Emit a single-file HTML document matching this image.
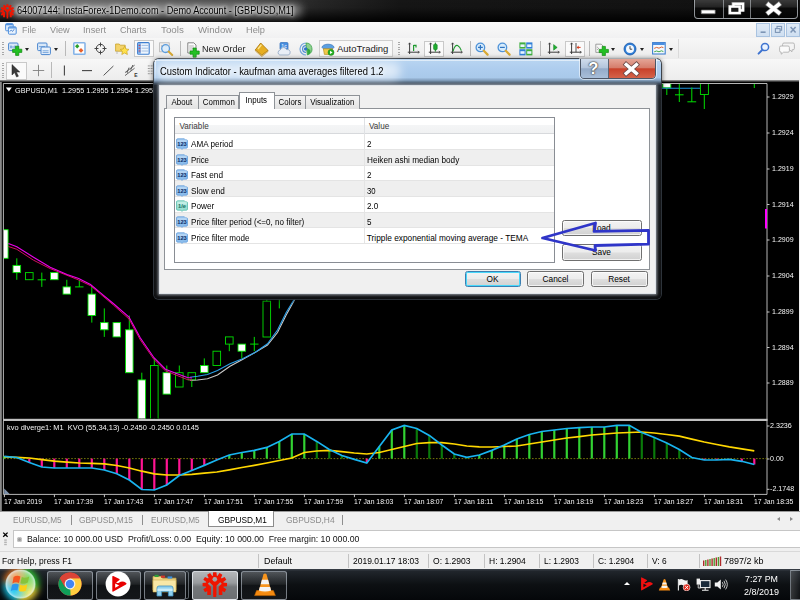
<!DOCTYPE html>
<html lang="en">
<head>
<meta charset="utf-8">
<title>64007144: InstaForex-1Demo.com - Demo Account - [GBPUSD,M1]</title>
<style>
html,body{margin:0;padding:0;}
body{width:800px;height:600px;overflow:hidden;position:relative;background:#f0f0f0;font-family:"Liberation Sans",sans-serif;font-size:9.4px;color:#000;}
.abs{position:absolute;}
.t{position:absolute;white-space:nowrap;line-height:1;transform-origin:0 0;}
/* title bar */
#titlebar{left:0;top:0;width:800px;height:21.5px;background:linear-gradient(rgba(0,0,0,0) 0,rgba(0,0,0,.08) 35%,rgba(0,0,0,.7) 80%,rgba(0,0,0,.95) 100%),linear-gradient(90deg,#626262 0,#5a5a5a 12%,#444 28%,#262626 40%,#161616 50%,#111 100%);}
#title{color:#000;text-shadow:0 0 3px rgba(255,255,255,.9),0 0 5px rgba(255,255,255,.8),0 0 8px rgba(255,255,255,.7);}
#titleglow{left:12px;top:4px;width:290px;height:13px;border-radius:8px;background:rgba(255,255,255,.42);filter:blur(4px);}
/* menu */
#menubar{left:0;top:21.5px;width:800px;height:16px;background:linear-gradient(#fafafa,#f1f1f2);border-bottom:1px solid #d0d0d0;}
.mi{font-size:9.5px;color:#8d8d8d;}
/* toolbars */
#tb1{left:0;top:38px;width:800px;height:21px;background:linear-gradient(#f7f7f7,#ececec);}
#tb2{left:0;top:59px;width:800px;height:22px;background:linear-gradient(#f7f7f7,#ececec);}
.grip{width:2px;background:repeating-linear-gradient(#a8a8a8 0,#a8a8a8 1px,transparent 1px,transparent 2.4px);}
.sep{width:1px;background:#b9b9b9;}
.tog{border:1px solid #c9c9c9;background:#fafafa;box-sizing:border-box;}
.dd{width:0;height:0;border-left:2.6px solid transparent;border-right:2.6px solid transparent;border-top:3px solid #222;}
.tbt{font-size:9.5px;color:#222;}
/* chart */
#chart{left:0;top:81px;width:799px;height:430px;background:#000;}
.ax{color:#f6f6f6;font-size:7.7px;}
/* dialog */
#dlg{left:153.5px;top:59px;width:507px;height:239.5px;border-radius:5px;background:linear-gradient(#b9d5f1 0,#aecdee 10px,#a9c9ea 18.5px,#7f9bb8 21.5px,#3d4c5d 24.5px,#232a33 26.5px,#1b1e22 40px,#101113 100%);box-shadow:0 0 0 1px rgba(50,56,64,.9),0 1px 5px 1px rgba(0,0,0,.55);}
#dlgclient{left:159.5px;top:86px;width:495.5px;height:207px;background:#f0f0f0;box-shadow:0 0 0 1px #dfe3e8,0 0 2.5px 2px rgba(190,198,208,.75);}
#dlgtitle{color:#000;text-shadow:0 0 5px #fff,0 0 8px #fff;}
.tab span{display:inline-block;transform:scaleX(.95);}
.tab{position:absolute;top:94.5px;height:14px;box-sizing:border-box;border:1px solid #8e9297;border-bottom:none;background:linear-gradient(#f4f4f4,#e2e2e2);font-size:8.3px;text-align:center;line-height:13.5px;color:#000;}
#tabpage{left:164px;top:108px;width:486px;height:161.5px;background:#fff;border:1px solid #8e9297;box-sizing:border-box;}
#list{left:173.5px;top:116.5px;width:381.5px;height:146px;background:#fff;border:1px solid #898d94;box-sizing:border-box;}
.row{position:absolute;left:174.5px;width:379.5px;height:15.6px;box-sizing:border-box;border-bottom:1px solid #e4e4e4;}
.row.g{background:#efefef;}
.ltx{font-size:8.3px;color:#000;}
.lt{position:absolute;white-space:nowrap;font-size:8.15px;line-height:1;color:#000;}
.btn{position:absolute;box-sizing:border-box;border:1px solid #707070;border-radius:2.5px;background:linear-gradient(#f3f3f3 0,#ececec 48%,#dedede 52%,#d1d1d1 100%);box-shadow:inset 0 0 0 1px rgba(255,255,255,.7);font-size:8.3px;text-align:center;color:#000;}
/* bottom */
#ctabs{left:0;top:511px;width:800px;height:17px;background:#f0f0f0;border-top:1px solid #9a9a9a;box-sizing:border-box;}
.ct{top:515.5px;font-size:9.4px;color:#8b8b8b;}
#term{left:0;top:528px;width:800px;height:23px;background:#f0f0f0;}
#termbox{left:12.5px;top:530px;width:788px;height:18px;background:#fff;border:1px solid #c6c6c6;box-sizing:border-box;}
#status{left:0;top:551px;width:800px;height:18px;background:#f0f0f0;border-top:1px solid #d9d9d9;box-sizing:border-box;}
.st{top:556px;font-size:9.4px;color:#000;}
.ssep{top:553.5px;width:1px;height:14px;background:#c3c3c3;}
#taskbar{left:0;top:569px;width:800px;height:31px;background:linear-gradient(#3a4149 0,#20252b 8%,#0d1013 50%,#05070a 100%);}
.tbb{position:absolute;top:570.5px;height:29px;width:45px;box-sizing:border-box;border:1px solid rgba(200,210,220,.55);border-radius:2.5px;background:linear-gradient(rgba(255,255,255,.22),rgba(255,255,255,.08) 45%,rgba(255,255,255,.02) 50%,rgba(255,255,255,.06));}
</style>
</head>
<body>
<!-- ===== title bar ===== -->
<div id="titlebar" class="abs"></div>
<div id="titleglow" class="abs"></div>
<svg class="abs" style="left:0.4px;top:4.4px" width="14.8" height="14.8" viewBox="-13 -13 26 26.4"><mask id="gm1"><rect x="-13" y="-13" width="26" height="27" fill="#fff"/><circle cx="0" cy="-5.4" r="2.4" fill="#000"/><path d="M-2.9 13 L-2.9 1.6 L-6.4 -1.7 M2.9 13 L2.9 1.6 L6.4 -1.7" stroke="#000" stroke-width="2.3" fill="none"/></mask><g fill="#ee1500" mask="url(#gm1)"><path d="M-2.2 -8 L-1.7 -12.7 L1.7 -12.7 L2.2 -8 Z" transform="rotate(0)"/><path d="M-2.2 -8 L-1.7 -12.7 L1.7 -12.7 L2.2 -8 Z" transform="rotate(30)"/><path d="M-2.2 -8 L-1.7 -12.7 L1.7 -12.7 L2.2 -8 Z" transform="rotate(60)"/><path d="M-2.2 -8 L-1.7 -12.7 L1.7 -12.7 L2.2 -8 Z" transform="rotate(90)"/><path d="M-2.2 -8 L-1.7 -12.7 L1.7 -12.7 L2.2 -8 Z" transform="rotate(120)"/><path d="M-2.2 -8 L-1.7 -12.7 L1.7 -12.7 L2.2 -8 Z" transform="rotate(-30)"/><path d="M-2.2 -8 L-1.7 -12.7 L1.7 -12.7 L2.2 -8 Z" transform="rotate(-60)"/><path d="M-2.2 -8 L-1.7 -12.7 L1.7 -12.7 L2.2 -8 Z" transform="rotate(-90)"/><path d="M-2.2 -8 L-1.7 -12.7 L1.7 -12.7 L2.2 -8 Z" transform="rotate(-120)"/><circle cx="0" cy="0" r="9.3"/><path d="M-7.8 3 h3.9 v7.8 h-3.9z M3.9 3 h3.9 v7.8 h-3.9z"/><rect x="-4" y="4" width="8" height="6.6"/><rect x="-1.7" y="0" width="3.4" height="12.8"/></g></svg>
<div class="abs" style="left:694px;top:-3px;width:103.5px;height:21.6px;border:1px solid rgba(190,195,200,.75);border-radius:0 0 4px 4px;box-sizing:border-box;background:linear-gradient(rgba(255,255,255,.20),rgba(255,255,255,.08) 45%,rgba(0,0,0,.35) 50%,rgba(0,0,0,.25));box-shadow:0 0 0 1px rgba(0,0,0,.6)"></div><div class="abs" style="left:722.5px;top:0;width:1px;height:17.5px;background:rgba(190,195,200,.6)"></div><div class="abs" style="left:750px;top:0;width:1px;height:17.5px;background:rgba(190,195,200,.6)"></div><svg class="abs" style="left:695px;top:0px" width="102" height="17" viewBox="0 0 102 17"><rect x="6.2" y="10" width="14" height="3.8" rx="0.6" fill="#fff" stroke="#666" stroke-width="0.7"/><g fill="none" stroke="#777" stroke-width="3.2"><rect x="38" y="3.6" width="10" height="6.6"/><rect x="34.6" y="6.6" width="10" height="6.4"/></g><g fill="none" stroke="#fff" stroke-width="2.4"><rect x="38.4" y="3.8" width="9.6" height="6.6"/><rect x="35" y="6.6" width="9.6" height="6.4" fill="#1a1a1a"/></g><path d="M73.6 4.6 L83.6 12.6 M83.6 4.6 L73.6 12.6" stroke="#777" stroke-width="5" stroke-linecap="square"/><path d="M73.6 4.6 L83.6 12.6 M83.6 4.6 L73.6 12.6" stroke="#fff" stroke-width="3.6" stroke-linecap="square"/></svg>

<!-- ===== menu bar ===== -->
<div id="menubar" class="abs"></div>
<svg class="abs" style="left:4.5px;top:23px" width="12" height="12" viewBox="0 0 12 12"><rect x="0.6" y="0.6" width="7.6" height="7.2" rx="1" fill="#dcebfb" stroke="#4f8fdc" stroke-width="1"/><rect x="3.4" y="3.8" width="7.8" height="7.4" rx="1" fill="#e8f2fd" stroke="#4f8fdc" stroke-width="1"/><path d="M4.8 8.6 l1.4 -1.6 l1.4 1.4 l1.6 -2.2" stroke="#2f6fc4" stroke-width="0.8" fill="none"/><rect x="1" y="1" width="6.8" height="1.3" fill="#4f8fdc"/><rect x="3.8" y="4.2" width="7" height="1.3" fill="#4f8fdc"/></svg>
<div class="abs" style="left:755.5px;top:23px;width:14.5px;height:13.5px;box-sizing:border-box;border:1px solid #a9c3e0;background:linear-gradient(#dfeaf6,#cfdff1)"></div><div class="abs" style="left:770.5px;top:23px;width:14.5px;height:13.5px;box-sizing:border-box;border:1px solid #a9c3e0;background:linear-gradient(#dfeaf6,#cfdff1)"></div><div class="abs" style="left:785.5px;top:23px;width:14.5px;height:13.5px;box-sizing:border-box;border:1px solid #a9c3e0;background:linear-gradient(#dfeaf6,#cfdff1)"></div><svg class="abs" style="left:755.5px;top:23px" width="45" height="13.5" viewBox="0 0 45 13.5"><rect x="4.6" y="8.4" width="5" height="1.6" fill="#7d95b5"/><g fill="none" stroke="#7d95b5" stroke-width="1.1"><rect x="21" y="3.4" width="4.6" height="3.8"/><rect x="19.4" y="5.6" width="4.6" height="3.8" fill="#d6e4f3"/></g><path d="M34.6 4 L39.6 9.6 M39.6 4 L34.6 9.6" stroke="#7d95b5" stroke-width="1.5"/></svg>

<!-- ===== toolbars ===== -->
<div id="tb1" class="abs"></div>
<div id="tb2" class="abs"></div>
<div class="abs grip" style="left:2px;top:41.5px;height:14px"></div>
<svg class="abs" style="left:8px;top:41.5px" width="15" height="14" viewBox="0 0 15 14"><rect x="0.6" y="1" width="9.4" height="7.6" rx="1" fill="#d9e8f8" stroke="#4a86cf" stroke-width="1"/><path d="M2 5 h6 M3 3.4 v3 M7 3.4 v3" stroke="#4a86cf" stroke-width="0.7"/><path d="M4.6 7.2 h3 v-3 h3.2 v3 h3 v3.2 h-3 v3 h-3.2 v-3 h-3 z" fill="#22c022" stroke="#0d8a0d" stroke-width="0.7"/></svg>
<div class="abs dd" style="left:25.2px;top:47.5px"></div>
<svg class="abs" style="left:37px;top:41.5px" width="15" height="14" viewBox="0 0 15 14"><rect x="0.6" y="1" width="9.4" height="7.6" rx="1" fill="#d9e8f8" stroke="#4a86cf" stroke-width="1"/><path d="M2 4.6 h6" stroke="#4a86cf" stroke-width="0.7"/><rect x="4" y="5" width="9.4" height="7.6" rx="1" fill="#e8f1fb" stroke="#4a86cf" stroke-width="1"/><path d="M5.6 8.8 h6 M5.6 10.6 h6" stroke="#4a86cf" stroke-width="0.7"/></svg>
<div class="abs dd" style="left:54.2px;top:47.5px"></div>
<div class="abs sep" style="left:65px;top:41px;height:15px"></div>
<svg class="abs" style="left:72.5px;top:42px" width="13" height="13" viewBox="0 0 13 13"><rect x="0.8" y="0.8" width="11.2" height="11.4" rx="0.8" fill="#fdfdfd" stroke="#86b4e8" stroke-width="1.6"/><path d="M4.2 2 l2.2 2.2 l-2.2 2.2 l-2.2 -2.2z" fill="#2aa02a"/><path d="M8 6 l2.4 2.4 l-2.4 2.4 l-2.4 -2.4z" fill="#e8602a"/></svg>
<svg class="abs" style="left:93.5px;top:42px" width="13" height="13" viewBox="0 0 13 13"><circle cx="6.5" cy="6.5" r="4.2" fill="none" stroke="#444" stroke-width="1"/><path d="M6.5 0.5 v4 M6.5 8.5 v4 M0.5 6.5 h4 M8.5 6.5 h4" stroke="#444" stroke-width="1"/></svg>
<svg class="abs" style="left:114.5px;top:41px" width="15" height="15" viewBox="0 0 15 15"><path d="M0.6 3 h3.6 l1 1.2 h5 v6 h-9.6z" fill="#f4d36a" stroke="#c9a227" stroke-width="0.8"/><path d="M2 10 v3" stroke="#b0b0b0" stroke-width="0.8"/><path d="M9.6 5.2 l1.4 2.8 l3 .4 l-2.2 2.1 l.6 3 l-2.8 -1.5 l-2.8 1.5 l.6 -3 l-2.2 -2.1 l3 -.4z" fill="#ffe14a" stroke="#c9a227" stroke-width="0.7"/></svg>
<div class="abs tog" style="left:134px;top:40px;width:19.5px;height:16.5px"></div>
<svg class="abs" style="left:137px;top:42px" width="13" height="13" viewBox="0 0 13 13"><rect x="0.6" y="0.6" width="11.6" height="11.6" rx="1" fill="#eef5fd" stroke="#3e7fd0" stroke-width="1.1"/><rect x="1.2" y="1.2" width="2.6" height="10.4" fill="#6aa4e6"/><path d="M4.6 3.4 h6.6 M4.6 6.2 h6.6 M4.6 9 h6.6" stroke="#8db3de" stroke-width="0.8"/><path d="M1.6 3.4 h1.8 M1.6 6.2 h1.8 M1.6 9 h1.8" stroke="#d33" stroke-width="0.9"/></svg>
<svg class="abs" style="left:159px;top:41.5px" width="15" height="14" viewBox="0 0 15 14"><rect x="0.6" y="0.8" width="9.6" height="9" fill="#efefef" stroke="#b5b5b5" stroke-width="0.8"/><path d="M2 4 h2 M6 4 h2" stroke="#888" stroke-width="0.8"/><circle cx="6.6" cy="6.6" r="3.9" fill="#d9ecfb" fill-opacity=".85" stroke="#5a9bdc" stroke-width="1.3"/><path d="M9.6 9.6 L13.2 13" stroke="#d4a530" stroke-width="2" stroke-linecap="round"/></svg>
<div class="abs sep" style="left:179.5px;top:41px;height:15px"></div>
<svg class="abs" style="left:187px;top:41.5px" width="14" height="16" viewBox="0 0 14 16"><path d="M0.8 0.8 h6 l2.2 2.2 v8 h-8.2z" fill="#fbfbfb" stroke="#6a6a6a" stroke-width="0.8"/><path d="M2.2 4 h4.6 M2.2 6 h4.6 M2.2 8 h3" stroke="#9a9a9a" stroke-width="0.7"/><path d="M3 9 h3 v-3 h3.2 v3 h3 v3.2 h-3 v3 h-3.2 v-3 h-3 z" fill="#22c022" stroke="#0d8a0d" stroke-width="0.7"/></svg>
<div class="t tbt" style="left:202px;top:43.8px;transform:scaleX(0.949);">New Order</div>
<svg class="abs" style="left:254px;top:41px" width="16" height="16" viewBox="0 0 16 16"><path d="M1.4 8.8 L6.7 2 L14 9.4 L7.8 14.4 Z" fill="#e6ae22" stroke="#a87208" stroke-width="0.8" stroke-linejoin="round"/><path d="M1.4 8.8 L7.8 14.4 L14 9.4 L14 10.6 L7.8 15.6 L1.4 10z" fill="#f6dc8c" stroke="#a87208" stroke-width="0.5"/><path d="M4 8 L7.4 3.8" stroke="#fbe58e" stroke-width="1.4"/></svg>
<svg class="abs" style="left:277px;top:41.5px" width="14" height="14" viewBox="0 0 14 14"><rect x="3" y="0.6" width="8" height="7" rx="1" fill="#4a90e0" stroke="#2a68b8" stroke-width="0.7"/><text x="7" y="6" font-size="5" font-family="Liberation Sans,sans-serif" fill="#fff" text-anchor="middle">1c</text><path d="M2.8 13 a2.6 2.6 0 0 1 0.4 -5 a3.4 3.4 0 0 1 6.4 -0.4 a2.8 2.8 0 0 1 1.6 5.4z" fill="#e8eef6" stroke="#8fa6c4" stroke-width="0.8"/></svg>
<svg class="abs" style="left:298.5px;top:41.5px" width="14" height="14" viewBox="0 0 14 14"><path d="M7 1 A6 6 0 0 0 7 13" stroke="#7aa8dc" fill="none" stroke-width="1.2"/><path d="M7 3.6 A3.4 3.4 0 0 0 7 10.4" stroke="#4f8cd2" fill="none" stroke-width="1.2"/><path d="M7 1 A6 6 0 0 1 9.6 12.4 L8.4 13 L7.6 7.6 Z" fill="#8ed08e" stroke="#3aa04a" stroke-width="0.8"/><path d="M8 6 L8.6 13 A4 4 0 0 0 11.2 8z" fill="#2fa83c"/><circle cx="6.6" cy="7" r="1.7" fill="#2f74c8"/></svg>
<div class="abs" style="left:318.5px;top:39.5px;width:74.5px;height:17.5px;box-sizing:border-box;border:1px solid #cfcfcf;background:#f8f8f8"></div>
<svg class="abs" style="left:321px;top:41.5px" width="14" height="14" viewBox="0 0 14 14"><path d="M1 5.4 a6 3.2 0 0 1 12 0 l-1.4 1.4 h-9.2z" fill="#5b9fe0" stroke="#2f6fb8" stroke-width="0.7"/><path d="M2.4 6.8 h9.2 l-1 5.6 h-7.2z" fill="#f0c94a" stroke="#b98f1c" stroke-width="0.7"/><circle cx="10" cy="10.4" r="3" fill="#22b022" stroke="#0f7f0f" stroke-width="0.5"/><path d="M9 8.8 l2.6 1.6 l-2.6 1.6z" fill="#fff"/></svg>
<div class="t tbt" style="left:337px;top:43.8px;">AutoTrading</div>
<div class="abs grip" style="left:398px;top:41.5px;height:14px"></div>
<svg class="abs" style="left:406.5px;top:42px" width="13" height="13" viewBox="0 0 13 13"><path d="M2.6 1 v11 M0.8 10.2 h11.4" stroke="#3c3c3c" stroke-width="1"/><path d="M1.4 2.4 l1.2 -1.6 l1.2 1.6 M10.8 9 l1.6 1.2 l-1.6 1.2" stroke="#3c3c3c" stroke-width="0.7" fill="none"/><path d="M6.6 3 v6 M6.6 3.4 h2.4 v2" stroke="#1f9a2f" stroke-width="1.2" fill="none"/></svg>
<div class="abs tog" style="left:424px;top:40.5px;width:20px;height:16px"></div>
<svg class="abs" style="left:428px;top:42px" width="13" height="13" viewBox="0 0 13 13"><path d="M2.6 1 v11 M0.8 10.2 h11.4" stroke="#3c3c3c" stroke-width="1"/><path d="M1.4 2.4 l1.2 -1.6 l1.2 1.6 M10.8 9 l1.6 1.2 l-1.6 1.2" stroke="#3c3c3c" stroke-width="0.7" fill="none"/><path d="M7.4 0.6 v9" stroke="#0f7f1f" stroke-width="0.9"/><rect x="5.6" y="2.2" width="3.6" height="5.6" rx="1" fill="#1fae2f" stroke="#0f7f1f" stroke-width="0.6"/></svg>
<svg class="abs" style="left:449.5px;top:42px" width="13" height="13" viewBox="0 0 13 13"><path d="M2.6 1 v11 M0.8 10.2 h11.4" stroke="#3c3c3c" stroke-width="1"/><path d="M1.4 2.4 l1.2 -1.6 l1.2 1.6 M10.8 9 l1.6 1.2 l-1.6 1.2" stroke="#3c3c3c" stroke-width="0.7" fill="none"/><path d="M3 9.4 Q5 2.4 7.6 3.6 Q10 5 11.4 8.6" stroke="#1f9a2f" stroke-width="1.1" fill="none"/></svg>
<div class="abs sep" style="left:469.5px;top:41px;height:15px"></div>
<svg class="abs" style="left:475px;top:41.5px" width="14" height="14" viewBox="0 0 14 14"><circle cx="5.4" cy="5.4" r="4.3" fill="#d6ebfc" stroke="#4f93d8" stroke-width="1.3"/><path d="M8.8 8.8 L12.6 12.6" stroke="#d9aa35" stroke-width="2.2" stroke-linecap="round"/><path d="M3 5.4 h4.8 M5.4 3 v4.8" stroke="#2f74c0" stroke-width="1.2"/></svg>
<svg class="abs" style="left:497px;top:41.5px" width="14" height="14" viewBox="0 0 14 14"><circle cx="5.4" cy="5.4" r="4.3" fill="#d6ebfc" stroke="#4f93d8" stroke-width="1.3"/><path d="M8.8 8.8 L12.6 12.6" stroke="#d9aa35" stroke-width="2.2" stroke-linecap="round"/><path d="M3 5.4 h4.8" stroke="#2f74c0" stroke-width="1.2"/></svg>
<svg class="abs" style="left:519px;top:41.5px" width="14" height="14" viewBox="0 0 14 14"><rect x="0.4" y="0.4" width="6.2" height="6.2" fill="#3fae3f"/><rect x="7.2" y="0.4" width="6.2" height="6.2" fill="#2f7fd8"/><rect x="0.4" y="7.2" width="6.2" height="6.2" fill="#2f7fd8"/><rect x="7.2" y="7.2" width="6.2" height="6.2" fill="#3fae3f"/><g fill="#e8f4ff"><rect x="1.4" y="2.4" width="4.2" height="2.6"/><rect x="8.2" y="2.4" width="4.2" height="2.6"/><rect x="1.4" y="9.2" width="4.2" height="2.6"/><rect x="8.2" y="9.2" width="4.2" height="2.6"/></g></svg>
<div class="abs sep" style="left:539.5px;top:41px;height:15px"></div>
<svg class="abs" style="left:546.5px;top:42px" width="13" height="13" viewBox="0 0 13 13"><path d="M2.6 1 v11 M0.8 10.2 h11.4" stroke="#3c3c3c" stroke-width="1"/><path d="M1.4 2.4 l1.2 -1.6 l1.2 1.6 M10.8 9 l1.6 1.2 l-1.6 1.2" stroke="#3c3c3c" stroke-width="0.7" fill="none"/><path d="M6.6 2.6 l3.6 2.8 l-3.6 2.8z" fill="#1fae2f" stroke="#0f7f1f" stroke-width="0.5"/></svg>
<div class="abs tog" style="left:565px;top:40.5px;width:19.5px;height:16px"></div>
<svg class="abs" style="left:568.5px;top:42px" width="13" height="13" viewBox="0 0 13 13"><path d="M2.6 1 v11 M0.8 10.2 h11.4" stroke="#3c3c3c" stroke-width="1"/><path d="M1.4 2.4 l1.2 -1.6 l1.2 1.6 M10.8 9 l1.6 1.2 l-1.6 1.2" stroke="#3c3c3c" stroke-width="0.7" fill="none"/><path d="M7 1 v9.2" stroke="#3c3c3c" stroke-width="0.9"/><path d="M11.6 5.4 h-3.2" stroke="#d63a1a" stroke-width="1"/><path d="M9.6 3.6 l-2 1.8 l2 1.8z" fill="#d63a1a"/></svg>
<div class="abs sep" style="left:588.5px;top:41px;height:15px"></div>
<svg class="abs" style="left:595px;top:41.5px" width="14" height="14" viewBox="0 0 14 14"><path d="M0.8 2.2 h5.4 l1.8 1.8 v6.4 h-7.2z" fill="#f6f6f6" stroke="#8a8a8a" stroke-width="0.8"/><path d="M2.2 5 l1.4 1.4 l-1.4 1.4" stroke="#777" stroke-width="0.7" fill="none"/><path d="M4.2 7.4 h3 v-3 h3.2 v3 h3 v3.2 h-3 v3 h-3.2 v-3 h-3 z" fill="#22c022" stroke="#0d8a0d" stroke-width="0.7"/></svg>
<div class="abs dd" style="left:611px;top:47.5px"></div>
<svg class="abs" style="left:623px;top:41.5px" width="14" height="14" viewBox="0 0 14 14"><circle cx="7" cy="7" r="6" fill="#2f7fd8" stroke="#1c57a6" stroke-width="0.8"/><circle cx="7" cy="7" r="4" fill="#f4f9ff"/><path d="M7 4.2 v3 h2.2" stroke="#333" stroke-width="0.9" fill="none"/></svg>
<div class="abs dd" style="left:640px;top:47.5px"></div>
<svg class="abs" style="left:651.5px;top:42px" width="14" height="13" viewBox="0 0 14 13"><rect x="0.6" y="0.6" width="12.6" height="11.4" fill="#f4f8fd" stroke="#3e7fd0" stroke-width="1.1"/><rect x="1" y="1" width="11.8" height="2" fill="#4a8ee0"/><path d="M2.2 6.4 l2.4 -1 l2.4 .8 l2.4 -1.2 l2 .6" stroke="#d6501a" stroke-width="0.9" fill="none"/><path d="M2.2 9.8 l2.4 -.8 l2.4 .8 l2.4 -1 l2 .8" stroke="#2fa03a" stroke-width="0.9" fill="none"/></svg>
<div class="abs dd" style="left:669px;top:47.5px"></div>
<div class="abs" style="left:677.5px;top:39px;width:1px;height:19px;background:#dadada"></div>
<svg class="abs" style="left:756.5px;top:42px" width="13" height="13" viewBox="0 0 13 13"><circle cx="8" cy="5" r="3.6" fill="#eaf3ff" stroke="#3f74d0" stroke-width="1.5"/><path d="M5.4 7.8 L1.6 11.6" stroke="#3f74d0" stroke-width="2" stroke-linecap="round"/></svg>
<svg class="abs" style="left:778.5px;top:42px" width="16" height="13" viewBox="0 0 16 13"><path d="M5 1 h9 a1.4 1.4 0 0 1 1.4 1.4 v4 a1.4 1.4 0 0 1 -1.4 1.4 h-1 v2 l-2.4 -2 h-5.6 a1.4 1.4 0 0 1 -1.4 -1.4 v-4 a1.4 1.4 0 0 1 1.4 -1.4z" fill="#f4f4f4" stroke="#a9a9a9" stroke-width="0.8"/><path d="M2 4 h7 a1.4 1.4 0 0 1 1.4 1.4 v3.4 a1.4 1.4 0 0 1 -1.4 1.4 h-4.4 l-2.4 2 v-2 h-.2 a1.4 1.4 0 0 1 -1.4 -1.4 v-3.4 a1.4 1.4 0 0 1 1.4 -1.4z" fill="#fbfbfb" stroke="#a9a9a9" stroke-width="0.8"/></svg>
<div class="abs grip" style="left:2px;top:63px;height:15px"></div>
<div class="abs tog" style="left:6px;top:61.5px;width:20.5px;height:18px"></div>
<svg class="abs" style="left:11px;top:64px" width="10" height="14" viewBox="0 0 10 14"><path d="M1 0.6 L1 11 L3.6 8.6 L5.6 13 L7.4 12.2 L5.4 8 L8.8 8 Z" fill="#3a3a3a" stroke="#222" stroke-width="0.5"/></svg>
<svg class="abs" style="left:32px;top:64px" width="13" height="13" viewBox="0 0 13 13"><path d="M6.5 0.8 v11.4 M0.8 6.5 h11.4" stroke="#808080" stroke-width="0.9"/></svg>
<div class="abs sep" style="left:51px;top:62px;height:16px"></div>
<svg class="abs" style="left:58px;top:64px" width="13" height="13" viewBox="0 0 13 13"><path d="M6.4 1.4 v10" stroke="#444" stroke-width="1.1"/></svg>
<svg class="abs" style="left:80px;top:64px" width="14" height="13" viewBox="0 0 14 13"><path d="M2 6.6 h10" stroke="#444" stroke-width="1.1"/></svg>
<svg class="abs" style="left:102px;top:64px" width="13" height="13" viewBox="0 0 13 13"><path d="M1.6 11.4 L11.4 2" stroke="#555" stroke-width="1"/></svg>
<svg class="abs" style="left:123.5px;top:63px" width="15" height="15" viewBox="0 0 15 15"><path d="M1 9.6 L10.6 2.2 M1 12.6 L10.6 5.2 M3 10 L5 4.6 M6.6 7.4 L8.8 2" stroke="#555" stroke-width="0.9" fill="none"/><text x="10.2" y="14.4" font-size="5" font-weight="bold" font-family="Liberation Sans,sans-serif" fill="#333">E</text></svg>
<svg class="abs" style="left:146.5px;top:64px" width="7" height="12" viewBox="0 0 7 12"><g fill="#9c9c9c"><rect x="0.8" y="1.4" width="2" height="1"/><rect x="3.6" y="1.4" width="2" height="1"/><rect x="0.8" y="4" width="2" height="1"/><rect x="3.6" y="4" width="2" height="1"/><rect x="0.8" y="6.6" width="2" height="1"/><rect x="3.6" y="6.6" width="2" height="1"/><rect x="0.8" y="9.2" width="2" height="1"/><rect x="3.6" y="9.2" width="2" height="1"/></g></svg>

<!-- ===== chart ===== -->
<div id="chart" class="abs"></div>
<svg class="abs" style="left:0;top:0" width="800" height="600" viewBox="0 0 800 600">
<!-- frames -->
<rect x="0" y="81" width="1.8" height="430" fill="#8a8a8a"/>
<rect x="0" y="80.4" width="799" height="1.6" fill="#3c3c3c"/>
<g fill="none" stroke="#cacaca" stroke-width="0.9">
<path d="M3.4 419 V83.5 H767 V494.4"/>
<path d="M3.4 421 V494.4 H767"/>
</g>
<rect x="3" y="418.8" width="764.5" height="2.2" fill="#c0c0c0"/>
<clipPath id="cpm"><rect x="4" y="84" width="763" height="334.6"/></clipPath>
<g clip-path="url(#cpm)">
<line x1="4.3" y1="229.7" x2="4.3" y2="258.3" stroke="#00e000" stroke-width="1"/>
<rect x="0.5" y="229.7" width="7.6" height="28.6" fill="#fff" stroke="#00e000" stroke-width="0.9"/>
<line x1="16.8" y1="258.3" x2="16.8" y2="279.8" stroke="#00e000" stroke-width="1"/>
<rect x="13.0" y="265.4" width="7.6" height="7.2" fill="#fff" stroke="#00e000" stroke-width="0.9"/>
<line x1="29.3" y1="272.6" x2="29.3" y2="279.8" stroke="#00e000" stroke-width="1"/>
<rect x="25.5" y="272.6" width="7.6" height="7.1" fill="#000" stroke="#00e000" stroke-width="0.9"/>
<line x1="41.8" y1="272.6" x2="41.8" y2="286.9" stroke="#00e000" stroke-width="1"/>
<line x1="37.6" y1="279.8" x2="46.0" y2="279.8" stroke="#00e000" stroke-width="1"/>
<line x1="54.3" y1="272.6" x2="54.3" y2="279.8" stroke="#00e000" stroke-width="1"/>
<rect x="50.5" y="272.6" width="7.6" height="7.1" fill="#fff" stroke="#00e000" stroke-width="0.9"/>
<line x1="66.8" y1="279.8" x2="66.8" y2="294.1" stroke="#00e000" stroke-width="1"/>
<rect x="63.0" y="286.9" width="7.6" height="7.2" fill="#fff" stroke="#00e000" stroke-width="0.9"/>
<line x1="79.3" y1="279.8" x2="79.3" y2="286.9" stroke="#00e000" stroke-width="1"/>
<line x1="75.1" y1="286.9" x2="83.5" y2="286.9" stroke="#00e000" stroke-width="1"/>
<line x1="91.8" y1="286.9" x2="91.8" y2="322.6" stroke="#00e000" stroke-width="1"/>
<rect x="88.0" y="294.1" width="7.6" height="21.4" fill="#fff" stroke="#00e000" stroke-width="0.9"/>
<line x1="104.3" y1="308.4" x2="104.3" y2="336.9" stroke="#00e000" stroke-width="1"/>
<rect x="100.5" y="322.6" width="7.6" height="7.2" fill="#fff" stroke="#00e000" stroke-width="0.9"/>
<line x1="116.8" y1="322.6" x2="116.8" y2="336.9" stroke="#00e000" stroke-width="1"/>
<rect x="113.0" y="322.6" width="7.6" height="14.3" fill="#fff" stroke="#00e000" stroke-width="0.9"/>
<line x1="129.3" y1="315.5" x2="129.3" y2="372.7" stroke="#00e000" stroke-width="1"/>
<rect x="125.5" y="329.8" width="7.6" height="42.9" fill="#fff" stroke="#00e000" stroke-width="0.9"/>
<line x1="141.8" y1="372.7" x2="141.8" y2="422.8" stroke="#00e000" stroke-width="1"/>
<rect x="138.0" y="379.9" width="7.6" height="42.9" fill="#fff" stroke="#00e000" stroke-width="0.9"/>
<line x1="154.3" y1="358.4" x2="154.3" y2="422.8" stroke="#00e000" stroke-width="1"/>
<rect x="150.5" y="365.5" width="7.6" height="57.2" fill="#000" stroke="#00e000" stroke-width="0.9"/>
<line x1="166.8" y1="365.5" x2="166.8" y2="394.1" stroke="#00e000" stroke-width="1"/>
<rect x="163.0" y="372.7" width="7.6" height="21.4" fill="#fff" stroke="#00e000" stroke-width="0.9"/>
<line x1="179.3" y1="365.5" x2="179.3" y2="387.0" stroke="#00e000" stroke-width="1"/>
<rect x="175.5" y="372.7" width="7.6" height="14.3" fill="#000" stroke="#00e000" stroke-width="0.9"/>
<line x1="191.8" y1="372.7" x2="191.8" y2="387.0" stroke="#00e000" stroke-width="1"/>
<rect x="188.0" y="372.7" width="7.6" height="7.2" fill="#000" stroke="#00e000" stroke-width="0.9"/>
<line x1="204.3" y1="358.4" x2="204.3" y2="372.7" stroke="#00e000" stroke-width="1"/>
<rect x="200.5" y="365.5" width="7.6" height="7.2" fill="#fff" stroke="#00e000" stroke-width="0.9"/>
<line x1="216.8" y1="351.2" x2="216.8" y2="365.5" stroke="#00e000" stroke-width="1"/>
<rect x="213.0" y="351.2" width="7.6" height="14.3" fill="#000" stroke="#00e000" stroke-width="0.9"/>
<line x1="229.3" y1="336.9" x2="229.3" y2="351.2" stroke="#00e000" stroke-width="1"/>
<rect x="225.5" y="336.9" width="7.6" height="7.2" fill="#000" stroke="#00e000" stroke-width="0.9"/>
<line x1="241.8" y1="344.1" x2="241.8" y2="358.4" stroke="#00e000" stroke-width="1"/>
<rect x="238.0" y="344.1" width="7.6" height="7.1" fill="#fff" stroke="#00e000" stroke-width="0.9"/>
<line x1="254.3" y1="336.9" x2="254.3" y2="351.2" stroke="#00e000" stroke-width="1"/>
<line x1="250.1" y1="344.1" x2="258.5" y2="344.1" stroke="#00e000" stroke-width="1"/>
<line x1="266.8" y1="286.9" x2="266.8" y2="336.9" stroke="#00e000" stroke-width="1"/>
<rect x="263.0" y="301.2" width="7.6" height="35.8" fill="#000" stroke="#00e000" stroke-width="0.9"/>
<line x1="279.3" y1="279.8" x2="279.3" y2="308.4" stroke="#00e000" stroke-width="1"/>
<line x1="275.1" y1="294.1" x2="283.5" y2="294.1" stroke="#00e000" stroke-width="1"/>
<line x1="666.8" y1="83.5" x2="666.8" y2="95.0" stroke="#00e000" stroke-width="1"/>
<rect x="662.8" y="83.5" width="8" height="4.3" fill="#fff" stroke="#00e000" stroke-width="0.9"/>
<line x1="661.0" y1="88.3" x2="700.0" y2="88.3" stroke="#1e90d8" stroke-width="1.1"/>
<line x1="679.3" y1="83.5" x2="679.3" y2="102.0" stroke="#00e000" stroke-width="1"/>
<line x1="675.0" y1="94.8" x2="683.6" y2="94.8" stroke="#00e000" stroke-width="1"/>
<line x1="691.8" y1="87.5" x2="691.8" y2="101.8" stroke="#00e000" stroke-width="1"/>
<line x1="687.4" y1="101.8" x2="696.2" y2="101.8" stroke="#00e000" stroke-width="1"/>
<rect x="700.4" y="82" width="8" height="12.5" fill="#000" stroke="#00e000" stroke-width="0.9"/>
<line x1="704.3" y1="94.5" x2="704.3" y2="109.0" stroke="#00e000" stroke-width="1"/>
<line x1="754.3" y1="83.5" x2="754.3" y2="88.0" stroke="#00e000" stroke-width="1"/>
<polyline points="190.0,380.2 197.5,380.0 207.5,378.8 217.5,375.0 230.0,366.2 242.5,359.5 255.0,352.5 267.5,345.0 277.5,332.5 286.2,315.0 293.8,301.2 297.0,295.5" fill="none" stroke="#c8c8c8" stroke-width="1.1"/>
<polyline points="190.0,377.2 197.5,376.2 207.5,374.5 217.5,370.5 230.0,363.8 242.5,358.8 255.0,352.5 267.5,343.8 277.5,330.0 286.2,312.5 293.8,300.0 297.0,294.0" fill="none" stroke="#2aa0e8" stroke-width="1.1"/>
<polyline points="8.4,246.5 16.8,249.3 33.5,260.2 50.2,268.6 67.0,275.3 78.7,280.0 90.5,285.7 100.5,294.0 113.3,305.0 129.0,319.0 140.4,340.0 154.0,359.5 165.4,370.8 175.8,375.0 187.3,379.5 192.0,380.2" fill="none" stroke="#d0105c" stroke-width="1"/>
<polyline points="8.4,243.5 16.8,246.8 33.5,257.2 50.2,267.2 67.0,274.4 78.7,278.6 90.5,284.5 100.5,292.9 113.3,303.5 129.0,317.0 140.4,338.0 154.0,357.7 165.4,369.2 175.8,373.3 187.3,377.5 192.0,378.0" fill="none" stroke="#ee00ee" stroke-width="1.1"/>
<line x1="766.0" y1="209.0" x2="766.0" y2="228.5" stroke="#ff00ff" stroke-width="2"/>
</g>
<g>
<line x1="4" y1="458.6" x2="767" y2="458.6" stroke="#77770a" stroke-width="1" stroke-dasharray="1.6,1.6"/>
<line x1="4.3" y1="458.6" x2="4.3" y2="456.3" stroke="#32d232" stroke-width="2.2"/>
<line x1="16.8" y1="458.6" x2="16.8" y2="457.5" stroke="#0a7a0a" stroke-width="2.2"/>
<line x1="29.3" y1="458.6" x2="29.3" y2="462.5" stroke="#ff1493" stroke-width="2.2"/>
<line x1="41.8" y1="458.6" x2="41.8" y2="467.0" stroke="#ff1493" stroke-width="2.2"/>
<line x1="54.3" y1="458.6" x2="54.3" y2="468.0" stroke="#ff1493" stroke-width="2.2"/>
<line x1="66.8" y1="458.6" x2="66.8" y2="468.0" stroke="#ff1493" stroke-width="2.2"/>
<line x1="79.3" y1="458.6" x2="79.3" y2="468.0" stroke="#ff1493" stroke-width="2.2"/>
<line x1="91.8" y1="458.6" x2="91.8" y2="468.0" stroke="#ff1493" stroke-width="2.2"/>
<line x1="104.3" y1="458.6" x2="104.3" y2="470.0" stroke="#ff1493" stroke-width="2.2"/>
<line x1="116.8" y1="458.6" x2="116.8" y2="473.8" stroke="#ff1493" stroke-width="2.2"/>
<line x1="129.3" y1="458.6" x2="129.3" y2="480.0" stroke="#ff1493" stroke-width="2.2"/>
<line x1="141.8" y1="458.6" x2="141.8" y2="489.5" stroke="#ff1493" stroke-width="2.2"/>
<line x1="154.3" y1="458.6" x2="154.3" y2="490.0" stroke="#ff1493" stroke-width="2.2"/>
<line x1="166.8" y1="458.6" x2="166.8" y2="485.0" stroke="#ff1493" stroke-width="2.2"/>
<line x1="179.3" y1="458.6" x2="179.3" y2="475.5" stroke="#ff1493" stroke-width="2.2"/>
<line x1="191.8" y1="458.6" x2="191.8" y2="470.5" stroke="#ff1493" stroke-width="2.2"/>
<line x1="204.3" y1="458.6" x2="204.3" y2="465.4" stroke="#ff1493" stroke-width="2.2"/>
<line x1="216.8" y1="458.6" x2="216.8" y2="460.0" stroke="#ff1493" stroke-width="2.2"/>
<line x1="229.3" y1="458.6" x2="229.3" y2="455.0" stroke="#32d232" stroke-width="2.2"/>
<line x1="241.8" y1="458.6" x2="241.8" y2="452.5" stroke="#32d232" stroke-width="2.2"/>
<line x1="254.3" y1="458.6" x2="254.3" y2="450.4" stroke="#32d232" stroke-width="2.2"/>
<line x1="266.8" y1="458.6" x2="266.8" y2="447.4" stroke="#32d232" stroke-width="2.2"/>
<line x1="279.3" y1="458.6" x2="279.3" y2="441.4" stroke="#32d232" stroke-width="2.2"/>
<line x1="291.8" y1="458.6" x2="291.8" y2="434.0" stroke="#32d232" stroke-width="2.2"/>
<line x1="304.3" y1="458.6" x2="304.3" y2="434.0" stroke="#32d232" stroke-width="2.2"/>
<line x1="316.8" y1="458.6" x2="316.8" y2="441.4" stroke="#0a7a0a" stroke-width="2.2"/>
<line x1="329.3" y1="458.6" x2="329.3" y2="449.5" stroke="#0a7a0a" stroke-width="2.2"/>
<line x1="341.8" y1="458.6" x2="341.8" y2="455.5" stroke="#0a7a0a" stroke-width="2.2"/>
<line x1="366.8" y1="458.6" x2="366.8" y2="463.0" stroke="#ff1493" stroke-width="2.2"/>
<line x1="379.3" y1="458.6" x2="379.3" y2="446.5" stroke="#32d232" stroke-width="2.2"/>
<line x1="391.8" y1="458.6" x2="391.8" y2="430.0" stroke="#32d232" stroke-width="2.2"/>
<line x1="404.3" y1="458.6" x2="404.3" y2="425.5" stroke="#32d232" stroke-width="2.2"/>
<line x1="416.8" y1="458.6" x2="416.8" y2="428.5" stroke="#0a7a0a" stroke-width="2.2"/>
<line x1="429.3" y1="458.6" x2="429.3" y2="435.4" stroke="#0a7a0a" stroke-width="2.2"/>
<line x1="441.8" y1="458.6" x2="441.8" y2="445.0" stroke="#0a7a0a" stroke-width="2.2"/>
<line x1="454.3" y1="458.6" x2="454.3" y2="454.0" stroke="#0a7a0a" stroke-width="2.2"/>
<line x1="466.8" y1="458.6" x2="466.8" y2="457.3" stroke="#0a7a0a" stroke-width="2.2"/>
<line x1="479.3" y1="458.6" x2="479.3" y2="455.0" stroke="#32d232" stroke-width="2.2"/>
<line x1="491.8" y1="458.6" x2="491.8" y2="450.4" stroke="#32d232" stroke-width="2.2"/>
<line x1="504.3" y1="458.6" x2="504.3" y2="445.0" stroke="#32d232" stroke-width="2.2"/>
<line x1="516.8" y1="458.6" x2="516.8" y2="439.0" stroke="#32d232" stroke-width="2.2"/>
<line x1="529.3" y1="458.6" x2="529.3" y2="434.5" stroke="#32d232" stroke-width="2.2"/>
<line x1="541.8" y1="458.6" x2="541.8" y2="431.5" stroke="#32d232" stroke-width="2.2"/>
<line x1="554.3" y1="458.6" x2="554.3" y2="430.0" stroke="#32d232" stroke-width="2.2"/>
<line x1="566.8" y1="458.6" x2="566.8" y2="428.5" stroke="#32d232" stroke-width="2.2"/>
<line x1="579.3" y1="458.6" x2="579.3" y2="427.6" stroke="#32d232" stroke-width="2.2"/>
<line x1="591.8" y1="458.6" x2="591.8" y2="427.0" stroke="#32d232" stroke-width="2.2"/>
<line x1="604.3" y1="458.6" x2="604.3" y2="427.0" stroke="#32d232" stroke-width="2.2"/>
<line x1="616.8" y1="458.6" x2="616.8" y2="425.3" stroke="#32d232" stroke-width="2.2"/>
<line x1="629.3" y1="458.6" x2="629.3" y2="425.3" stroke="#32d232" stroke-width="2.2"/>
<line x1="641.8" y1="458.6" x2="641.8" y2="432.5" stroke="#0a7a0a" stroke-width="2.2"/>
<line x1="654.3" y1="458.6" x2="654.3" y2="437.5" stroke="#0a7a0a" stroke-width="2.2"/>
<line x1="666.8" y1="458.6" x2="666.8" y2="443.0" stroke="#0a7a0a" stroke-width="2.2"/>
<line x1="679.3" y1="458.6" x2="679.3" y2="449.5" stroke="#0a7a0a" stroke-width="2.2"/>
<line x1="691.8" y1="458.6" x2="691.8" y2="457.5" stroke="#0a7a0a" stroke-width="2.2"/>
<line x1="704.3" y1="458.6" x2="704.3" y2="460.0" stroke="#ff1493" stroke-width="2.2"/>
<line x1="716.8" y1="458.6" x2="716.8" y2="460.0" stroke="#ff1493" stroke-width="2.2"/>
<line x1="741.8" y1="458.6" x2="741.8" y2="461.3" stroke="#ff1493" stroke-width="2.2"/>
<line x1="754.3" y1="458.6" x2="754.3" y2="464.5" stroke="#ff1493" stroke-width="2.2"/>
<polyline points="4.3,456.8 16.8,457.3 29.3,458.0 41.8,459.6 54.3,461.2 66.8,462.2 79.3,463.0 91.8,463.4 104.3,463.8 116.8,465.5 129.3,468.0 141.8,471.2 154.3,473.8 166.8,475.0 179.3,475.0 191.8,474.4 204.3,473.2 216.8,472.0 229.3,469.8 241.8,467.5 254.3,465.3 266.8,463.0 279.3,460.5 291.8,458.0 304.3,452.5 316.8,451.0 329.3,450.4 341.8,451.6 354.3,453.0 366.8,454.0 379.3,452.5 391.8,449.5 404.3,446.5 416.8,443.5 429.3,442.6 441.8,442.6 454.3,444.0 466.8,446.0 479.3,446.8 491.8,447.0 504.3,446.5 516.8,446.0 529.3,444.0 541.8,442.0 554.3,440.0 566.8,438.0 579.3,436.6 591.8,435.0 604.3,434.0 616.8,433.0 629.3,432.5 641.8,432.0 654.3,433.0 666.8,434.5 679.3,436.2 691.8,439.2 704.3,442.0 716.8,444.5 729.3,446.8 741.8,448.8 754.3,450.8" fill="none" stroke="#ffd700" stroke-width="1.7"/>
<polyline points="4.3,456.3 16.8,457.5 29.3,462.5 41.8,467.0 54.3,468.0 66.8,468.0 79.3,468.0 91.8,468.0 104.3,470.0 116.8,473.8 129.3,480.0 141.8,489.5 154.3,490.0 166.8,485.0 179.3,475.5 191.8,470.5 204.3,465.4 216.8,460.0 229.3,455.0 241.8,452.5 254.3,450.4 266.8,447.4 279.3,441.4 291.8,434.0 304.3,434.0 316.8,441.4 329.3,449.5 341.8,455.5 354.3,459.4 366.8,463.0 379.3,446.5 391.8,430.0 404.3,425.5 416.8,428.5 429.3,435.4 441.8,445.0 454.3,454.0 466.8,457.3 479.3,455.0 491.8,450.4 504.3,445.0 516.8,439.0 529.3,434.5 541.8,431.5 554.3,430.0 566.8,428.5 579.3,427.6 591.8,427.0 604.3,427.0 616.8,425.3 629.3,425.3 641.8,432.5 654.3,437.5 666.8,443.0 679.3,449.5 691.8,457.5 704.3,460.0 716.8,460.0 729.3,459.3 741.8,461.3 754.3,464.5" fill="none" stroke="#19b4f0" stroke-width="1.7"/>
</g>
<g stroke="#c4c4c4" stroke-width="1">
<line x1="767" y1="97.0" x2="769.5" y2="97.0"/>
<line x1="767" y1="133.0" x2="769.5" y2="133.0"/>
<line x1="767" y1="169.0" x2="769.5" y2="169.0"/>
<line x1="767" y1="204.5" x2="769.5" y2="204.5"/>
<line x1="767" y1="240.0" x2="769.5" y2="240.0"/>
<line x1="767" y1="276.0" x2="769.5" y2="276.0"/>
<line x1="767" y1="312.0" x2="769.5" y2="312.0"/>
<line x1="767" y1="347.5" x2="769.5" y2="347.5"/>
<line x1="767" y1="383.0" x2="769.5" y2="383.0"/>
<line x1="767" y1="426.0" x2="769.5" y2="426.0"/>
<line x1="767" y1="459.0" x2="769.5" y2="459.0"/>
<line x1="767" y1="489.3" x2="769.5" y2="489.3"/>
<line x1="4.4" y1="494.4" x2="4.4" y2="497.2"/>
<line x1="54.4" y1="494.4" x2="54.4" y2="497.2"/>
<line x1="104.4" y1="494.4" x2="104.4" y2="497.2"/>
<line x1="154.4" y1="494.4" x2="154.4" y2="497.2"/>
<line x1="204.4" y1="494.4" x2="204.4" y2="497.2"/>
<line x1="254.4" y1="494.4" x2="254.4" y2="497.2"/>
<line x1="304.4" y1="494.4" x2="304.4" y2="497.2"/>
<line x1="354.4" y1="494.4" x2="354.4" y2="497.2"/>
<line x1="404.4" y1="494.4" x2="404.4" y2="497.2"/>
<line x1="454.4" y1="494.4" x2="454.4" y2="497.2"/>
<line x1="504.4" y1="494.4" x2="504.4" y2="497.2"/>
<line x1="554.4" y1="494.4" x2="554.4" y2="497.2"/>
<line x1="604.4" y1="494.4" x2="604.4" y2="497.2"/>
<line x1="654.4" y1="494.4" x2="654.4" y2="497.2"/>
<line x1="704.4" y1="494.4" x2="704.4" y2="497.2"/>
<line x1="754.4" y1="494.4" x2="754.4" y2="497.2"/>
</g>
<path d="M5.8 87.6 h6 l-3 3.8 z" fill="#fff"/>
<path d="M4.2 488.5 v5.5 h5.5 z" fill="#7f93ad"/>
</svg>
<div class="t ax" style="left:15.4px;top:86.7px;transform:scaleX(0.948);">GBPUSD,M1&nbsp; 1.2955 1.2955 1.2954 1.2955</div>
<div class="t ax" style="left:771.8px;top:93.1px;transform:scaleX(0.918);">1.2929</div>
<div class="t ax" style="left:771.8px;top:129.1px;transform:scaleX(0.918);">1.2924</div>
<div class="t ax" style="left:771.8px;top:165.1px;transform:scaleX(0.918);">1.2919</div>
<div class="t ax" style="left:771.8px;top:200.6px;transform:scaleX(0.918);">1.2914</div>
<div class="t ax" style="left:771.8px;top:236.1px;transform:scaleX(0.918);">1.2909</div>
<div class="t ax" style="left:771.8px;top:272.1px;transform:scaleX(0.918);">1.2904</div>
<div class="t ax" style="left:771.8px;top:308.1px;transform:scaleX(0.918);">1.2899</div>
<div class="t ax" style="left:771.8px;top:343.6px;transform:scaleX(0.918);">1.2894</div>
<div class="t ax" style="left:771.8px;top:379.1px;transform:scaleX(0.918);">1.2889</div>
<div class="t ax" style="left:769.6px;top:422.1px;transform:scaleX(0.927);">2.3236</div>
<div class="t ax" style="left:769.6px;top:455.1px;transform:scaleX(0.922);">0.00</div>
<div class="t ax" style="left:769.6px;top:485.40000000000003px;transform:scaleX(0.928);">-2.1748</div>
<div class="t ax" style="left:7px;top:423.6px;transform:scaleX(0.968);">kvo diverge1: M1&nbsp; KVO (55,34,13) -0.2450 -0.2450 0.0145</div>
<div class="t ax" style="left:4.0px;top:497.6px;transform:scaleX(0.898);">17 Jan 2019</div>
<div class="t ax" style="left:54.0px;top:497.6px;transform:scaleX(0.886);">17 Jan 17:39</div>
<div class="t ax" style="left:104.0px;top:497.6px;transform:scaleX(0.886);">17 Jan 17:43</div>
<div class="t ax" style="left:154.0px;top:497.6px;transform:scaleX(0.886);">17 Jan 17:47</div>
<div class="t ax" style="left:204.0px;top:497.6px;transform:scaleX(0.886);">17 Jan 17:51</div>
<div class="t ax" style="left:254.0px;top:497.6px;transform:scaleX(0.886);">17 Jan 17:55</div>
<div class="t ax" style="left:304.0px;top:497.6px;transform:scaleX(0.886);">17 Jan 17:59</div>
<div class="t ax" style="left:354.0px;top:497.6px;transform:scaleX(0.886);">17 Jan 18:03</div>
<div class="t ax" style="left:404.0px;top:497.6px;transform:scaleX(0.886);">17 Jan 18:07</div>
<div class="t ax" style="left:454.0px;top:497.6px;transform:scaleX(0.898);">17 Jan 18:11</div>
<div class="t ax" style="left:504.0px;top:497.6px;transform:scaleX(0.886);">17 Jan 18:15</div>
<div class="t ax" style="left:554.0px;top:497.6px;transform:scaleX(0.886);">17 Jan 18:19</div>
<div class="t ax" style="left:604.0px;top:497.6px;transform:scaleX(0.886);">17 Jan 18:23</div>
<div class="t ax" style="left:654.0px;top:497.6px;transform:scaleX(0.886);">17 Jan 18:27</div>
<div class="t ax" style="left:704.0px;top:497.6px;transform:scaleX(0.886);">17 Jan 18:31</div>
<div class="t ax" style="left:754.0px;top:497.6px;transform:scaleX(0.886);">17 Jan 18:35</div>

<!-- ===== dialog ===== -->
<div id="dlg" class="abs"></div>
<div class="abs" style="left:154px;top:60px;width:506px;height:1.2px;background:rgba(255,255,255,.55)"></div>
<div class="abs" style="left:154.5px;top:60px;width:1.2px;height:22px;background:linear-gradient(rgba(255,255,255,.7),rgba(255,255,255,0))"></div>
<div class="abs" style="left:156px;top:62px;width:245px;height:18px;border-radius:9px;background:rgba(255,255,255,.6);filter:blur(5px)"></div>
<div class="abs" style="left:579.5px;top:58.5px;width:76.5px;height:20px;box-sizing:border-box;border:1px solid #4c5666;border-top:none;border-radius:0 0 4.5px 4.5px;overflow:hidden;box-shadow:0 0 0 1px rgba(255,255,255,.55)"><div class="abs" style="left:0;top:0;width:27px;height:19px;background:linear-gradient(#d0dcec 0,#b4c6dd 45%,#94abc9 52%,#a9bfd9 100%);border-right:1px solid #5a6474"></div><div class="abs" style="left:28px;top:0;width:48px;height:19px;background:linear-gradient(#e4a597 0,#d67e6c 45%,#c8412a 52%,#d4634a 100%)"></div></div>
<div class="t" style="left:588.2px;top:59.8px;font-size:16.5px;font-weight:bold;color:#fff;text-shadow:0 0 1px #444,0 0 1.5px #444,0 0 2px #555">?</div>
<svg class="abs" style="left:620px;top:60px" width="24" height="18" viewBox="0 0 24 18"><path d="M6.2 4.6 L16.4 13.4 M16.4 4.6 L6.2 13.4" stroke="#6a4a48" stroke-width="5" stroke-linecap="square"/><path d="M6.2 4.6 L16.4 13.4 M16.4 4.6 L6.2 13.4" stroke="#fff" stroke-width="3.4" stroke-linecap="square"/></svg>
<div id="dlgclient" class="abs"></div>
<div id="tabpage" class="abs"></div>
<div class="tab" style="left:165.5px;width:33px"><span>About</span></div>
<div class="tab" style="left:198px;width:41px"><span>Common</span></div>
<div class="tab" style="left:274px;width:31.5px"><span>Colors</span></div>
<div class="tab" style="left:305px;width:54.5px"><span>Visualization</span></div>
<div class="tab" style="left:238.5px;width:36px;top:92px;height:17px;background:#fff;line-height:15px"><span>Inputs</span></div>
<div id="list" class="abs"></div>
<div class="abs" style="left:174.5px;top:117.5px;width:379.5px;height:16.5px;background:linear-gradient(#fff 0,#fff 45%,#f4f5f6 50%,#f0f1f2 100%);border-bottom:1px solid #d7d9dc;box-sizing:border-box"></div>
<div class="abs" style="left:364px;top:117.5px;width:1px;height:16px;background:#dfe1e4"></div>
<div class="lt" style="left:179.5px;top:122.8px;color:#3a3a3a">Variable</div>
<div class="lt" style="left:369px;top:122.8px;color:#3a3a3a">Value</div>
<div class="row" style="top:134.60px"></div>
<svg class="abs" style="left:175.8px;top:137.90px" width="12" height="12" viewBox="0 0 12 12"><path d="M0.5 2 Q0.5 0.8 1.7 0.8 H8.4 L9.4 1.8 H10.4 Q11.5 1.8 11.5 3 V9 Q11.5 10.2 10.3 10.2 H7.2 L6 11.4 L4.8 10.2 H1.7 Q0.5 10.2 0.5 9 Z" fill="#8cbdec" stroke="#5a98da" stroke-width="0.7"/><rect x="1.2" y="1.6" width="9.6" height="3" fill="#d4e8fa" opacity=".55"/><text x="6" y="8.1" font-family="Liberation Sans,sans-serif" font-size="5.7" font-weight="bold" fill="#0e2c66" text-anchor="middle">123</text></svg>
<div class="t ltx" style="left:191.2px;top:139.90px;transform:scaleX(0.979);">AMA period</div>
<div class="t ltx" style="left:366.8px;top:139.90px;transform:scaleX(0.973);">2</div>
<div class="row g" style="top:150.22px"></div>
<svg class="abs" style="left:175.8px;top:153.53px" width="12" height="12" viewBox="0 0 12 12"><path d="M0.5 2 Q0.5 0.8 1.7 0.8 H8.4 L9.4 1.8 H10.4 Q11.5 1.8 11.5 3 V9 Q11.5 10.2 10.3 10.2 H7.2 L6 11.4 L4.8 10.2 H1.7 Q0.5 10.2 0.5 9 Z" fill="#8cbdec" stroke="#5a98da" stroke-width="0.7"/><rect x="1.2" y="1.6" width="9.6" height="3" fill="#d4e8fa" opacity=".55"/><text x="6" y="8.1" font-family="Liberation Sans,sans-serif" font-size="5.7" font-weight="bold" fill="#0e2c66" text-anchor="middle">123</text></svg>
<div class="t ltx" style="left:191.2px;top:155.53px;transform:scaleX(0.952);">Price</div>
<div class="t ltx" style="left:366.8px;top:155.53px;transform:scaleX(0.990);">Heiken ashi median body</div>
<div class="row" style="top:165.85px"></div>
<svg class="abs" style="left:175.8px;top:169.15px" width="12" height="12" viewBox="0 0 12 12"><path d="M0.5 2 Q0.5 0.8 1.7 0.8 H8.4 L9.4 1.8 H10.4 Q11.5 1.8 11.5 3 V9 Q11.5 10.2 10.3 10.2 H7.2 L6 11.4 L4.8 10.2 H1.7 Q0.5 10.2 0.5 9 Z" fill="#8cbdec" stroke="#5a98da" stroke-width="0.7"/><rect x="1.2" y="1.6" width="9.6" height="3" fill="#d4e8fa" opacity=".55"/><text x="6" y="8.1" font-family="Liberation Sans,sans-serif" font-size="5.7" font-weight="bold" fill="#0e2c66" text-anchor="middle">123</text></svg>
<div class="t ltx" style="left:191.2px;top:171.15px;transform:scaleX(0.991);">Fast end</div>
<div class="t ltx" style="left:366.8px;top:171.15px;transform:scaleX(0.973);">2</div>
<div class="row g" style="top:181.47px"></div>
<svg class="abs" style="left:175.8px;top:184.78px" width="12" height="12" viewBox="0 0 12 12"><path d="M0.5 2 Q0.5 0.8 1.7 0.8 H8.4 L9.4 1.8 H10.4 Q11.5 1.8 11.5 3 V9 Q11.5 10.2 10.3 10.2 H7.2 L6 11.4 L4.8 10.2 H1.7 Q0.5 10.2 0.5 9 Z" fill="#8cbdec" stroke="#5a98da" stroke-width="0.7"/><rect x="1.2" y="1.6" width="9.6" height="3" fill="#d4e8fa" opacity=".55"/><text x="6" y="8.1" font-family="Liberation Sans,sans-serif" font-size="5.7" font-weight="bold" fill="#0e2c66" text-anchor="middle">123</text></svg>
<div class="t ltx" style="left:191.2px;top:186.78px;transform:scaleX(0.990);">Slow end</div>
<div class="t ltx" style="left:366.8px;top:186.78px;transform:scaleX(0.931);">30</div>
<div class="row" style="top:197.10px"></div>
<svg class="abs" style="left:175.8px;top:200.40px" width="12" height="12" viewBox="0 0 12 12"><path d="M0.5 2 Q0.5 0.8 1.7 0.8 H8.4 L9.4 1.8 H10.4 Q11.5 1.8 11.5 3 V9 Q11.5 10.2 10.3 10.2 H7.2 L6 11.4 L4.8 10.2 H1.7 Q0.5 10.2 0.5 9 Z" fill="#9adfd2" stroke="#4ab8a6" stroke-width="0.7"/><rect x="1.2" y="1.6" width="9.6" height="3" fill="#e4faf4" opacity=".55"/><text x="6" y="8.1" font-family="Liberation Sans,sans-serif" font-size="5.7" font-weight="bold" fill="#1a7466" text-anchor="middle">1/e</text></svg>
<div class="t ltx" style="left:191.2px;top:202.40px;transform:scaleX(0.990);">Power</div>
<div class="t ltx" style="left:366.8px;top:202.40px;transform:scaleX(0.979);">2.0</div>
<div class="row g" style="top:212.72px"></div>
<svg class="abs" style="left:175.8px;top:216.03px" width="12" height="12" viewBox="0 0 12 12"><path d="M0.5 2 Q0.5 0.8 1.7 0.8 H8.4 L9.4 1.8 H10.4 Q11.5 1.8 11.5 3 V9 Q11.5 10.2 10.3 10.2 H7.2 L6 11.4 L4.8 10.2 H1.7 Q0.5 10.2 0.5 9 Z" fill="#8cbdec" stroke="#5a98da" stroke-width="0.7"/><rect x="1.2" y="1.6" width="9.6" height="3" fill="#d4e8fa" opacity=".55"/><text x="6" y="8.1" font-family="Liberation Sans,sans-serif" font-size="5.7" font-weight="bold" fill="#0e2c66" text-anchor="middle">123</text></svg>
<div class="t ltx" style="left:191.2px;top:218.03px;transform:scaleX(0.975);">Price filter period (&lt;=0, no filter)</div>
<div class="t ltx" style="left:366.8px;top:218.03px;transform:scaleX(0.973);">5</div>
<div class="row" style="top:228.35px"></div>
<svg class="abs" style="left:175.8px;top:231.65px" width="12" height="12" viewBox="0 0 12 12"><path d="M0.5 2 Q0.5 0.8 1.7 0.8 H8.4 L9.4 1.8 H10.4 Q11.5 1.8 11.5 3 V9 Q11.5 10.2 10.3 10.2 H7.2 L6 11.4 L4.8 10.2 H1.7 Q0.5 10.2 0.5 9 Z" fill="#8cbdec" stroke="#5a98da" stroke-width="0.7"/><rect x="1.2" y="1.6" width="9.6" height="3" fill="#d4e8fa" opacity=".55"/><text x="6" y="8.1" font-family="Liberation Sans,sans-serif" font-size="5.7" font-weight="bold" fill="#0e2c66" text-anchor="middle">123</text></svg>
<div class="t ltx" style="left:191.2px;top:233.65px;transform:scaleX(0.974);">Price filter mode</div>
<div class="t ltx" style="left:366.8px;top:233.65px;">Tripple exponential moving average - TEMA</div>
<div class="abs" style="left:364px;top:134px;width:1px;height:109.4px;background:#e4e4e4"></div>
<div class="btn" style="left:561.5px;top:219.5px;width:80px;height:16.5px;line-height:14.5px">Load</div>
<div class="btn" style="left:561.5px;top:244px;width:80px;height:16.5px;line-height:14.5px">Save</div>
<div class="btn" style="left:464.5px;top:270.5px;width:56px;height:16px;line-height:14px;border-color:#3c7fb1;box-shadow:inset 0 0 0 1px #48d8fb">OK</div>
<div class="btn" style="left:527px;top:270.5px;width:57px;height:16px;line-height:14px">Cancel</div>
<div class="btn" style="left:590.5px;top:270.5px;width:57px;height:16px;line-height:14px">Reset</div>
<svg class="abs" style="left:0;top:0" width="800" height="600" viewBox="0 0 800 600">
<path d="M594.3 231.2 L595.5 223 L542.5 238 L595.5 250.5 L595 245.5 L648.5 244.2 L648.5 230.4 L594 231.4" fill="none" stroke="#2f35c8" stroke-width="2.8" stroke-linejoin="round" stroke-linecap="round"/>
</svg>

<div class="t" id="title" style="left:17px;top:5.9px;font-size:10px;transform:scaleX(0.916);">64007144: InstaForex-1Demo.com - Demo Account - [GBPUSD,M1]</div>
<div class="t mi" style="left:21.7px;top:25.2px;transform:scaleX(0.934);">File</div>
<div class="t mi" style="left:49.7px;top:25.2px;transform:scaleX(0.960);">View</div>
<div class="t mi" style="left:83px;top:25.2px;transform:scaleX(0.968);">Insert</div>
<div class="t mi" style="left:120.4px;top:25.2px;transform:scaleX(0.951);">Charts</div>
<div class="t mi" style="left:161px;top:25.2px;transform:scaleX(1.028);">Tools</div>
<div class="t mi" style="left:197.8px;top:25.2px;transform:scaleX(1.012);">Window</div>
<div class="t mi" style="left:246px;top:25.2px;transform:scaleX(0.972);">Help</div>
<div class="t" id="dlgtitle" style="left:160px;top:67.1px;font-size:10.2px;transform:scaleX(0.920);">Custom Indicator - kaufman ama averages filtered 1.2</div>
<!-- ===== chart tabs ===== -->
<div id="ctabs" class="abs"></div>
<div class="abs" style="left:208px;top:510.5px;width:66px;height:16.5px;background:#fff;border:1px solid #8c8c8c;border-top:none;box-sizing:border-box"></div>
<div class="t ct" style="left:13px;top:515.3px;transform:scaleX(0.880);">EURUSD,M5</div>
<div class="t ct" style="left:79px;top:515.3px;transform:scaleX(0.893);">GBPUSD,M15</div>
<div class="t ct" style="left:151px;top:515.3px;transform:scaleX(0.880);">EURUSD,M5</div>
<div class="t ct" style="left:217.5px;top:515.3px;transform:scaleX(0.883);color:#000;">GBPUSD,M1</div>
<div class="t ct" style="left:286px;top:515.3px;transform:scaleX(0.897);">GBPUSD,H4</div>
<div class="abs" style="left:70.5px;top:514.5px;width:1px;height:10px;background:#8f8f8f"></div>
<div class="abs" style="left:141.5px;top:514.5px;width:1px;height:10px;background:#8f8f8f"></div>
<div class="abs" style="left:342px;top:514.5px;width:1px;height:10px;background:#8f8f8f"></div>
<div class="abs" style="left:776.5px;top:517px;width:0;height:0;border-top:2.6px solid transparent;border-bottom:2.6px solid transparent;border-right:3px solid #8a8a8a"></div>
<div class="abs" style="left:789.5px;top:517px;width:0;height:0;border-top:2.6px solid transparent;border-bottom:2.6px solid transparent;border-left:3px solid #8a8a8a"></div>

<!-- ===== terminal line ===== -->
<div id="term" class="abs"></div>
<div id="termbox" class="abs"></div>
<svg class="abs" style="left:2px;top:531px" width="8" height="16" viewBox="0 0 8 16"><path d="M1.2 1.6 L5.6 5.8 M5.6 1.6 L1.2 5.8" stroke="#000" stroke-width="1.3" fill="none"/><g fill="#b5b5b5"><rect x="2.2" y="8.4" width="2.6" height="1.4"/><rect x="2.2" y="10.6" width="2.6" height="1.4"/><rect x="2.2" y="12.8" width="2.6" height="1.4"/></g></svg>
<div class="abs" style="left:16.5px;top:536.5px;width:5.4px;height:5.4px;border-radius:50%;background:#9a9a9a;box-shadow:inset 0 0 0 1px #c9c9c9"></div>
<div class="t " style="left:26.5px;top:533.9px;font-size:9.5px;transform:scaleX(0.919);color:#111;">Balance: 10 000.00 USD&nbsp; Profit/Loss: 0.00&nbsp; Equity: 10 000.00&nbsp; Free margin: 10 000.00</div>

<!-- ===== status bar ===== -->
<div id="status" class="abs"></div>
<div class="t st" style="left:2.2px;top:556px;transform:scaleX(0.902);">For Help, press F1</div>
<div class="t st" style="left:263.5px;top:556px;transform:scaleX(0.942);">Default</div>
<div class="t st" style="left:352.5px;top:556px;transform:scaleX(0.904);">2019.01.17 18:03</div>
<div class="t st" style="left:432.5px;top:556px;transform:scaleX(0.910);">O: 1.2903</div>
<div class="t st" style="left:488.5px;top:556px;transform:scaleX(0.905);">H: 1.2904</div>
<div class="t st" style="left:544px;top:556px;transform:scaleX(0.890);">L: 1.2903</div>
<div class="t st" style="left:597.5px;top:556px;transform:scaleX(0.890);">C: 1.2904</div>
<div class="t st" style="left:651.5px;top:556px;transform:scaleX(0.894);">V: 6</div>
<div class="t st" style="left:724px;top:556px;transform:scaleX(0.959);">7897/2 kb</div>
<div class="abs ssep" style="left:258px"></div>
<div class="abs ssep" style="left:347.5px"></div>
<div class="abs ssep" style="left:428px"></div>
<div class="abs ssep" style="left:483.5px"></div>
<div class="abs ssep" style="left:539px"></div>
<div class="abs ssep" style="left:592.5px"></div>
<div class="abs ssep" style="left:646.5px"></div>
<div class="abs ssep" style="left:699px"></div>
<svg class="abs" style="left:702.5px;top:555.5px" width="20" height="10" viewBox="0 0 20 10"><rect x="0.0" y="4.5" width="1.4" height="5.5" fill="#b02a2a"/><rect x="2.1" y="4.0" width="1.4" height="6.0" fill="#4e9a2e"/><rect x="4.2" y="3.5" width="1.4" height="6.5" fill="#b02a2a"/><rect x="6.3" y="3.0" width="1.4" height="7.0" fill="#4e9a2e"/><rect x="8.4" y="2.5" width="1.4" height="7.5" fill="#b02a2a"/><rect x="10.5" y="2.0" width="1.4" height="8.0" fill="#4e9a2e"/><rect x="12.6" y="1.5" width="1.4" height="8.5" fill="#b02a2a"/><rect x="14.7" y="1.0" width="1.4" height="9.0" fill="#4e9a2e"/><rect x="16.8" y="0.5" width="1.4" height="9.5" fill="#b02a2a"/></svg>

<!-- ===== taskbar ===== -->
<div id="taskbar" class="abs"></div>
<div class="abs" style="left:0;top:569px;width:48px;height:31px;overflow:hidden"><div class="abs" style="left:2.5px;top:-2.5px;width:36px;height:36px;border-radius:50%;background:conic-gradient(from 10deg,#35e035 0 24%,#ffe23a 26% 49%,#16cdf0 51% 74%,#ff7d1c 76% 99%,#35e035 100%);filter:blur(3.2px);opacity:.85"></div></div>
<div class="abs" style="left:6.3px;top:569.7px;width:28.8px;height:28.8px;border-radius:50%;background:radial-gradient(circle at 34% 28%,rgba(255,150,70,.9),rgba(255,150,70,0) 46%),radial-gradient(circle at 72% 32%,rgba(110,220,70,.9),rgba(110,220,70,0) 46%),radial-gradient(circle at 28% 72%,rgba(30,200,245,.95),rgba(30,200,245,0) 52%),radial-gradient(circle at 68% 76%,rgba(252,232,70,.95),rgba(252,232,70,0) 50%),#c8e8ee;box-shadow:inset 0 0 2.5px rgba(255,255,255,.9),0 0 0 .6px rgba(220,240,250,.6)"></div>
<svg class="abs" style="left:9px;top:572px" width="24" height="24" viewBox="0 0 24 24"><path d="M4.6 5 Q8.2 2.8 11.4 4.6 L10 11 Q6.8 9.4 3.4 11.4z" fill="#f4561e"/><path d="M12.8 5 Q16.4 6.6 20.2 4.4 L18.8 10.6 Q15.2 12.6 11.4 11.2z" fill="#86c43c"/><path d="M3 12.8 Q6.4 10.8 9.8 12.4 L8.4 18.6 Q5.2 17 1.8 19z" fill="#2a98ec"/><path d="M11 12.8 Q14.8 14.2 18.4 12.2 L17 18.4 Q13.4 20.4 9.8 19z" fill="#fccf18"/></svg>
<div class="tbb" style="left:47px;width:45.5px;"></div>
<div class="tbb" style="left:95.5px;width:45.5px;"></div>
<div class="tbb" style="left:143.5px;width:42px;"></div>
<div class="tbb" style="left:191.5px;width:46px;background:linear-gradient(#b4b7ba 0,#989b9e 40%,#74777a 55%,#6c6f72 100%);border-color:rgba(235,240,245,.8);"></div>
<div class="tbb" style="left:241px;width:45.5px;"></div>
<div class="abs" style="left:185.5px;top:571px;width:3px;height:28px;border:1px solid rgba(200,210,220,.45);border-left:none;border-radius:0 2.5px 2.5px 0;box-sizing:border-box"></div>
<svg class="abs" style="left:57.5px;top:572px" width="24" height="24" viewBox="0 0 24 24"><circle cx="12" cy="12" r="11.6" fill="#db4437"/><path d="M12 12 L2 6.2 A11.6 11.6 0 0 0 12.6 23.6 L17.6 15 Z" fill="#0f9d58"/><path d="M12 12 L12.6 23.6 A11.6 11.6 0 0 0 22 6.2 L12 6.2 Z" fill="#ffcd40"/><path d="M2 6.2 A11.6 11.6 0 0 1 22 6.2 L12 6.2 L7 15z" fill="#db4437"/><path d="M12 12 L2 6.2 L7 15z" fill="#db4437"/><circle cx="12" cy="12" r="5.4" fill="#f1f1f1"/><circle cx="12" cy="12" r="4.2" fill="#4285f4"/></svg>
<svg class="abs" style="left:98px;top:568px" width="40" height="32" viewBox="0 0 40 32"><circle cx="20" cy="16" r="12.4" fill="#fff"/><path d="M14.3 8.6 Q14.3 7.6 15.3 8 L21.4 11 Q22 11.5 21.4 12 L18.2 14.4 Q19.6 15.6 21.2 14.4 Q24.6 12.4 28.2 15 Q29 15.8 28 16.5 L15.4 23.6 Q14.3 24.1 14.3 23 Z" fill="#e80000"/><path d="M17.2 15.6 L17.2 19.8 L21.2 17.4 Z" fill="#fff"/></svg>
<svg class="abs" style="left:152px;top:573px" width="26" height="24" viewBox="0 0 26 24"><path d="M1 3.6 h8 l1.6 1.6 h13.4 v12 h-23z" fill="#f3d98a" stroke="#c9a94a" stroke-width="0.8"/><path d="M1 7 h23 v12 h-23z" fill="#f8e7a6" stroke="#c9a94a" stroke-width="0.6"/><rect x="2.6" y="1.8" width="4" height="2.2" fill="#2fa03a"/><rect x="9" y="2.6" width="4" height="2.2" fill="#d63a2a"/><rect x="15.6" y="3.4" width="4.6" height="2.2" fill="#3a8fe0"/><path d="M5 23 v-8 a2 2 0 0 1 2 -2 h12 a2 2 0 0 1 2 2 v8 h-4.6 v-4.6 h-6.8 v4.6z" fill="#8fd0ee" stroke="#3f90c0" stroke-width="0.8"/><path d="M5.4 15.6 h15.2 v2.4 h-15.2z" fill="#c8ecfb"/></svg>
<svg class="abs" style="left:202px;top:572px" width="25.6" height="25.6" viewBox="-13 -13 26 26.4"><mask id="gm2"><rect x="-13" y="-13" width="26" height="27" fill="#fff"/><circle cx="0" cy="-5.4" r="2.4" fill="#000"/><path d="M-2.9 13 L-2.9 1.6 L-6.4 -1.7 M2.9 13 L2.9 1.6 L6.4 -1.7" stroke="#000" stroke-width="2.3" fill="none"/></mask><g fill="#ee1500" mask="url(#gm2)"><path d="M-2.2 -8 L-1.7 -12.7 L1.7 -12.7 L2.2 -8 Z" transform="rotate(0)"/><path d="M-2.2 -8 L-1.7 -12.7 L1.7 -12.7 L2.2 -8 Z" transform="rotate(30)"/><path d="M-2.2 -8 L-1.7 -12.7 L1.7 -12.7 L2.2 -8 Z" transform="rotate(60)"/><path d="M-2.2 -8 L-1.7 -12.7 L1.7 -12.7 L2.2 -8 Z" transform="rotate(90)"/><path d="M-2.2 -8 L-1.7 -12.7 L1.7 -12.7 L2.2 -8 Z" transform="rotate(120)"/><path d="M-2.2 -8 L-1.7 -12.7 L1.7 -12.7 L2.2 -8 Z" transform="rotate(-30)"/><path d="M-2.2 -8 L-1.7 -12.7 L1.7 -12.7 L2.2 -8 Z" transform="rotate(-60)"/><path d="M-2.2 -8 L-1.7 -12.7 L1.7 -12.7 L2.2 -8 Z" transform="rotate(-90)"/><path d="M-2.2 -8 L-1.7 -12.7 L1.7 -12.7 L2.2 -8 Z" transform="rotate(-120)"/><circle cx="0" cy="0" r="9.3"/><path d="M-7.8 3 h3.9 v7.8 h-3.9z M3.9 3 h3.9 v7.8 h-3.9z"/><rect x="-4" y="4" width="8" height="6.6"/><rect x="-1.7" y="0" width="3.4" height="12.8"/></g></svg>
<svg class="abs" style="left:251.5px;top:572px" width="26" height="25" viewBox="0 0 26 25"><path d="M2.6 23.6 L4.6 18.6 h16.8 l2 5 z" fill="#f58a10" stroke="#c96a00" stroke-width="0.6"/><path d="M6.6 19.6 L11.4 2.4 Q13 0.8 14.6 2.4 L19.4 19.6 Q13 22.4 6.6 19.6z" fill="#f7941d"/><path d="M9.9 7.8 h6.2 l1.2 4.4 h-8.6z" fill="#f4f4f4"/><path d="M7.8 15 h10.4 l0.9 3.4 q-6 2 -12.2 0z" fill="#f4f4f4"/></svg>
<div class="abs" style="left:624px;top:582px;width:0;height:0;border-left:3px solid transparent;border-right:3px solid transparent;border-bottom:3.4px solid #fff"></div>
<svg class="abs" style="left:639.5px;top:577px" width="14" height="14" viewBox="13.5 7.5 16 17"><path d="M14.3 8.6 Q14.3 7.6 15.3 8 L21.4 11 Q22 11.5 21.4 12 L18.2 14.4 Q19.6 15.6 21.2 14.4 Q24.6 12.4 28.2 15 Q29 15.8 28 16.5 L15.4 23.6 Q14.3 24.1 14.3 23 Z" fill="#f01010"/><path d="M17.2 15.6 L17.2 19.8 L21.2 17.4 Z" fill="#111"/></svg>
<svg class="abs" style="left:658px;top:577.5px" width="13" height="13" viewBox="0 0 13 13"><path d="M0.8 12.4 L2 9.6 h9 l1.2 2.8z" fill="#f58a10"/><path d="M3 10 L5.6 1.4 Q6.5 0.4 7.4 1.4 L10 10 Q6.5 11.6 3 10z" fill="#f7941d"/><path d="M4.8 4.4 h3.4 l.7 2.2 h-4.8z" fill="#f4f4f4"/><path d="M3.8 7.8 h5.4 l.5 1.6 q-3.2 1 -6.4 0z" fill="#f4f4f4"/></svg>
<svg class="abs" style="left:677px;top:577.5px" width="14" height="13" viewBox="0 0 14 13"><path d="M1.4 1 v11.6" stroke="#e8e8e8" stroke-width="1.1"/><path d="M2 1.6 Q4.4 0.4 6.4 1.8 T10.6 2 V7.6 Q8.4 8.6 6.4 7.4 T2 7.4z" fill="#f2f2f2"/><circle cx="9.6" cy="9.4" r="3.4" fill="#e02a1c" stroke="#fff" stroke-width="0.6"/><path d="M8.2 8 l2.8 2.8 M11 8 l-2.8 2.8" stroke="#fff" stroke-width="1"/></svg>
<svg class="abs" style="left:695.5px;top:577.5px" width="15" height="13" viewBox="0 0 15 13"><rect x="4.4" y="2.6" width="9.6" height="7" fill="#1a2a3a" stroke="#f0f0f0" stroke-width="1.1"/><path d="M6 12.2 h6.6 M9.2 9.6 v2.6" stroke="#f0f0f0" stroke-width="1.1"/><rect x="0.6" y="0.6" width="3.4" height="6" fill="#f0f0f0"/><path d="M2.2 6.6 v3.4 h2.4" stroke="#f0f0f0" stroke-width="0.8" fill="none"/></svg>
<svg class="abs" style="left:714px;top:577.5px" width="14" height="13" viewBox="0 0 14 13"><path d="M0.8 4.6 h2.6 l3.4 -3.2 v10.2 l-3.4 -3.2 h-2.6z" fill="#f2f2f2"/><path d="M8.4 4.2 q1.6 2.3 0 4.6 M10 2.8 q2.6 3.7 0 7.4 M11.6 1.6 q3.4 4.9 0 9.8" stroke="#f2f2f2" stroke-width="0.8" fill="none"/></svg>
<div class="t " style="left:744.5px;top:574px;font-size:9.5px;transform:scaleX(0.932);color:#fff;">7:27 PM</div>
<div class="t " style="left:743.8px;top:587.3px;font-size:9.5px;transform:scaleX(0.946);color:#fff;">2/8/2019</div>
<div class="abs" style="left:789.5px;top:569.5px;width:11px;height:30.5px;box-sizing:border-box;border:1px solid rgba(200,210,220,.5);background:linear-gradient(90deg,rgba(255,255,255,.18),rgba(255,255,255,.04))"></div>
</body>
</html>
